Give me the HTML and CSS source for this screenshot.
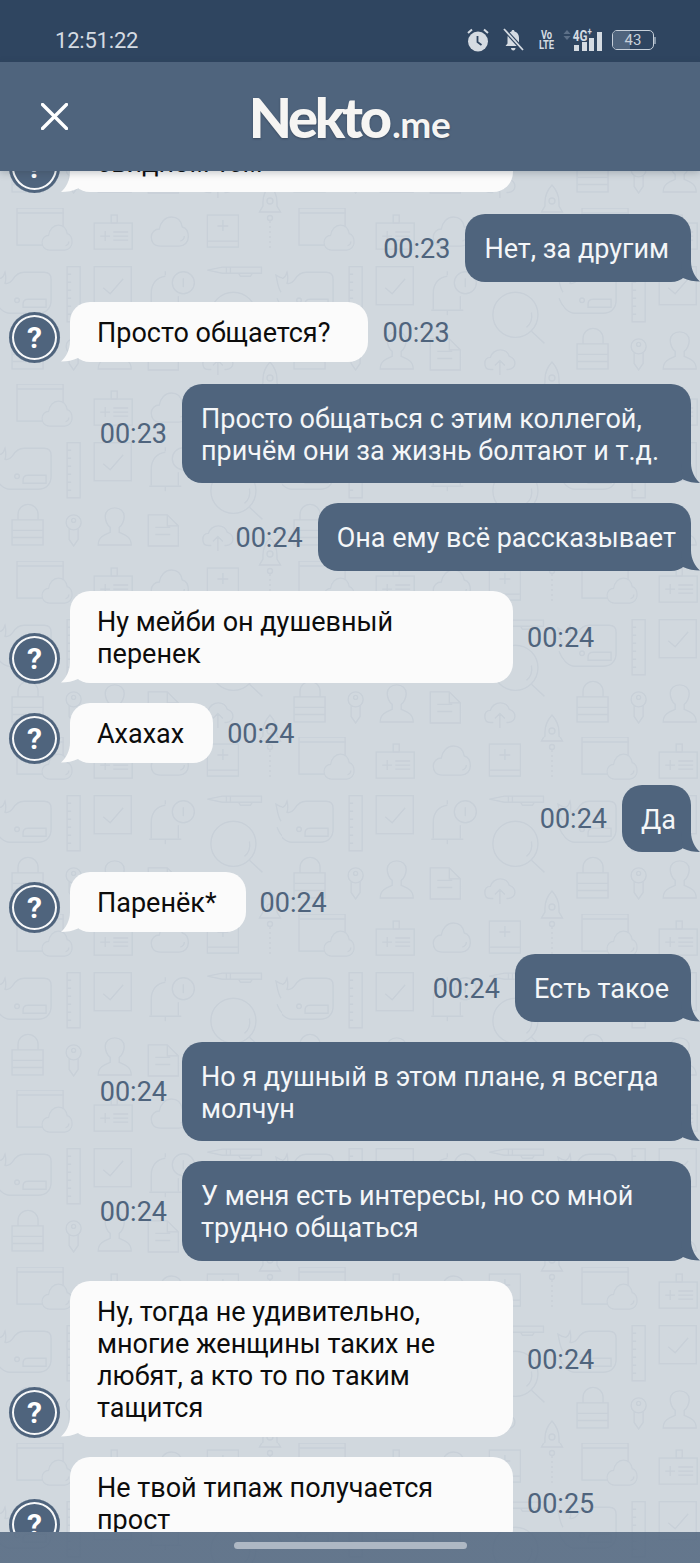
FILE: index.html
```html
<!DOCTYPE html>
<html lang="ru">
<head>
<meta charset="UTF-8">
<meta name="viewport" content="width=device-width, initial-scale=1.0">
<title>Nekto.me</title>
<link rel="stylesheet" href="styles.css">
</head>
<body>

<div class="phone">

  <div class="status">
    <span class="status__time">12:51:22</span>
    <div class="status__icons">
      <svg class="icon-alarm" width="22" height="24" viewBox="0 0 22 24">
        <circle cx="11" cy="13.5" r="10" fill="#d5dbe2"/>
        <path d="M10.5 8v6l4 3" fill="none" stroke="#2f4560" stroke-width="1.8"/>
        <path d="M1 5l4-3.5M21 5l-4-3.5" fill="none" stroke="#d5dbe2" stroke-width="2"/>
      </svg>
      <svg class="icon-bell" width="21" height="24" viewBox="0 0 21 24">
        <path d="M10 2c1 0 1.5.6 1.5 1.500C15 4.500 16 7.500 16 10v5l2 3H2.500l2-2.500V10c0-2.500 1-5.500 4-6.500C8.500 2.600 9 2 10 2z" fill="#d5dbe2"/>
        <path d="M8 20h4.500c0 1.500-1 2.500-2.200 2.500S8 21.500 8 20z" fill="#d5dbe2"/>
        <path d="M1 1l19 21" stroke="#2f4560" stroke-width="4"/>
        <path d="M1 1l19 21" stroke="#d5dbe2" stroke-width="1.8"/>
      </svg>
      <div class="volte"><span>Vo</span><span>LTE</span></div>
      <svg class="icon-arrows" width="8" height="10" viewBox="0 0 8 10">
        <path d="M4 0l3.5 4h-7zM4 10L.5 6h7z" fill="#5d7088"/>
      </svg>
      <div class="signal">
        <span class="signal__label">4G<sup>+</sup></span>
        <div class="signal__bars">
          <i class="bar bar--1"></i><i class="bar bar--2"></i><i class="bar bar--3"></i><i class="bar bar--4"></i>
        </div>
      </div>
      <div class="battery">
        <div class="battery__body">
          <div class="battery__level" style="width:43%"></div>
          <span class="battery__text">43</span>
        </div>
        <div class="battery__nub"></div>
      </div>
    </div>
  </div>

  <div class="topbar">
    <svg class="topbar__close" width="27" height="27" viewBox="0 0 27 27">
      <path d="M1.5 1.5l24 24M25.5 1.5l-24 24" stroke="#fff" stroke-width="3.4" stroke-linecap="round"/>
    </svg>
    <div class="logo">Nekto<span class="logo__me">.me</span></div>
  </div>

  <div class="chat">
    <div class="messages">

      <div class="msg msg--in">
        <div class="avatar">?</div>
        <div class="bubble bubble--in bubble--full">свидном тем</div>
      </div>

      <div class="msg msg--out">
        <span class="msg__time">00:23</span>
        <div class="bubble bubble--out bubble--roomy">Нет, за другим</div>
      </div>

      <div class="msg msg--in">
        <div class="avatar">?</div>
        <div class="bubble bubble--in bubble--roomy">Просто общается?</div>
        <span class="msg__time">00:23</span>
      </div>

      <div class="msg msg--out">
        <span class="msg__time">00:23</span>
        <div class="bubble bubble--out">Просто общаться с этим коллегой, причём они за жизнь болтают и т.д.</div>
      </div>

      <div class="msg msg--out">
        <span class="msg__time">00:24</span>
        <div class="bubble bubble--out">Она ему всё рассказывает</div>
      </div>

      <div class="msg msg--in">
        <div class="avatar">?</div>
        <div class="bubble bubble--in">Ну мейби он душевный перенек</div>
        <span class="msg__time">00:24</span>
      </div>

      <div class="msg msg--in">
        <div class="avatar">?</div>
        <div class="bubble bubble--in">Ахахах</div>
        <span class="msg__time">00:24</span>
      </div>

      <div class="msg msg--out">
        <span class="msg__time">00:24</span>
        <div class="bubble bubble--out">Да</div>
      </div>

      <div class="msg msg--in">
        <div class="avatar">?</div>
        <div class="bubble bubble--in">Паренёк*</div>
        <span class="msg__time">00:24</span>
      </div>

      <div class="msg msg--out">
        <span class="msg__time">00:24</span>
        <div class="bubble bubble--out bubble--roomy">Есть такое</div>
      </div>

      <div class="msg msg--out">
        <span class="msg__time">00:24</span>
        <div class="bubble bubble--out">Но я душный в этом плане, я всегда молчун</div>
      </div>

      <div class="msg msg--out">
        <span class="msg__time">00:24</span>
        <div class="bubble bubble--out">У меня есть интересы, но со мной трудно общаться</div>
      </div>

      <div class="msg msg--in">
        <div class="avatar">?</div>
        <div class="bubble bubble--in">Ну, тогда не удивительно, многие женщины таких не любят, а кто то по таким тащится</div>
        <span class="msg__time">00:24</span>
      </div>

      <div class="msg msg--in">
        <div class="avatar">?</div>
        <div class="bubble bubble--in">Не твой типаж получается прост</div>
        <span class="msg__time">00:25</span>
      </div>

    </div>
  </div>

  <div class="navbar">
    <div class="navbar__pill"></div>
  </div>

</div>

</body>
</html>
```

FILE: styles.css
```css
:root {
  --slate: #4f647d;
  --slate-dark: #2f4560;
  --paper: #d1d8de;
  /* the doodle wallpaper, one tile */
  --tile: url("data:image/svg+xml,%3Csvg xmlns='http://www.w3.org/2000/svg' width='282.5' height='176.5' viewBox='0 0 282.5 176.5'%3E%3Cdefs%3E%3Cg id='c'%3E%3Cpath d='M9 29C2 29 0 24 0 20C0 15 4 12 8 12C9 5 14 0 20 0C26 0 30 4 31 10C35 11 37 15 37 20C37 25 33 29 28 29Z'/%3E%3Cpath d='M29 24c3-1 4-3 4-5'/%3E%3C/g%3E%3Cg id='r'%3E%3Cpath d='M269.5-23C265-18 262.5-12 262.5-6V-2L259 4H280L276.5-2V-6C276.5-12 274-18 269.5-23Z'/%3E%3Ccircle cx='269.5' cy='-7' r='3'/%3E%3C/g%3E%3Cg id='w'%3E%3Cpath d='M-2 84C-5 80-6 72-7 67C-4 69-1 70 1 70C3 69 4 67 5 64C6 68 6 72 5 75C8 76 10 75 13 71C16 66 19 64 24 64H44Q51 64 51 71V92C51 100 46 105 38 105H10C3 105-3 98-6 90'/%3E%3Cpath d='M23 99V96C23 92 25 91 28 91H46V99Z'/%3E%3Ccircle cx='17' cy='92' r='2.3'/%3E%3C/g%3E%3C/defs%3E%3Cg fill='none' stroke='%23c8d0d8' stroke-width='1.4'%3E%3Crect x='17' y='0' width='46' height='37'/%3E%3Cpath d='M17 5H63'/%3E%3Cuse href='%23c' transform='translate(42 17) scale(.81 .86)' fill='%23d1d8de'/%3E%3Crect x='94' y='15' width='38' height='26'/%3E%3Crect x='111' y='7' width='6' height='8'/%3E%3Cpath d='M100 28h10M105 23v10M113 24h15M113 28h15M113 32h15'/%3E%3Cuse href='%23c' transform='translate(151 9)'/%3E%3Crect x='207' y='7' width='31' height='32'/%3E%3Cpath d='M207 33H238M217 18h11M222.5 12v11'/%3E%3Cuse href='%23r'/%3E%3Cuse href='%23r' y='176.5'/%3E%3Ccircle cx='269.5' cy='10' r='2.5'/%3E%3Cpath d='M269.5 13V41' stroke-dasharray='2 3'/%3E%3Cuse href='%23w'/%3E%3Cuse href='%23w' x='282.5'/%3E%3Crect x='67' y='58.5' width='13' height='55'/%3E%3Cpath d='M67 66h4M67 74h4M67 82h4M67 90h4M67 98h4M67 106h4'/%3E%3Crect x='94' y='58.5' width='37' height='38'/%3E%3Cpath d='M103 79.5L110 85.5L123 70.5'/%3E%3Cpath d='M151 101V85C151 75 157 69 165 68M178 88V101M149 102H181M165 102V107M165 63v4'/%3E%3Ccircle cx='183' cy='74.5' r='11'/%3E%3Cpath d='M183 70v9'/%3E%3Cpath d='M207 62L222 59H261V65H222ZM226 59v6M230 59v6M238 65L240 68H250L252 65'/%3E%3Ccircle cx='233' cy='106.5' r='22.5'/%3E%3Cpath d='M249 123L262 135M249 104C250 110 248 116 244 119'/%3E%3Crect x='12' y='135.5' width='31' height='25'/%3E%3Cpath d='M18 135.5V130A10 10 0 0 1 38 130V135.5M12 146H43M12 153H43'/%3E%3Ccircle cx='73.5' cy='138' r='7.5'/%3E%3Ccircle cx='73.5' cy='136' r='2'/%3E%3Cpath d='M69 144V155L73.5 161.5L78 155V144'/%3E%3Cpath d='M98 160.5C98 152 105 150 110 148V143C107 141 105 136 105 132C105 127 109 123.5 114.5 123.5C120 123.5 124 127 124 132C124 136 122 141 119 143V148C124 150 131 152 131 160.5Z'/%3E%3Cpath d='M148 130.5H167L178 141.5V161.5H148ZM167 130.5V141.5H178M155 143H170M155 150H170'/%3E%3Cpath d='M211 161H208C204 161 202.5 158 202.5 155C202.5 151 205 149 208 149C209 145 213 141.5 218 141.5C223 141.5 226 145 227 148C230 149 232.5 151 232.5 155C232.5 158 230 161 226 161H224M217.5 166.5V152M212.5 157L217.5 152L222.5 157'/%3E%3C/g%3E%3C/svg%3E");
}

* {
  box-sizing: border-box;
}

body {
  margin: 0;
  font-family: Roboto, "Noto Sans", sans-serif;
}

.phone {
  display: flex;
  flex-direction: column;
  width: 700px;
  height: 1563px;
  overflow: hidden;
}

/* status bar */
.status {
  display: flex;
  flex: none;
  align-items: center;
  justify-content: space-between;
  height: 62px;
  padding: 18px 44px 0 55px;
  background: var(--slate-dark);
  color: #d5dbe2;
}

.status__time {
  font-size: 22px;
  letter-spacing: -.2px;
}

.status__icons {
  display: flex;
  align-items: center;
}

.icon-alarm {
  margin-right: 14px;
}

.icon-bell {
  margin-right: 15px;
}

.volte {
  display: flex;
  flex-direction: column;
  align-items: center;
  width: 15px;
  margin-right: 9px;
  font-size: 13px;
  font-weight: 700;
  line-height: 10.5px;
  transform: scaleX(.72);
}

.icon-arrows {
  margin: -10px 1px 0 0;
}

.signal {
  display: flex;
  flex-direction: column;
  width: 31px;
  height: 21px;
  margin-right: 9px;
}

.signal__label {
  height: 12px;
  margin-left: -3px;
  font-size: 15px;
  font-weight: 700;
  line-height: 12px;
  transform: scaleX(.78);
}

.signal__label sup {
  font-size: 10px;
  line-height: 0;
}

.signal__bars {
  display: flex;
  align-items: flex-end;
  gap: 2.5px;
  height: 19px;
  margin-top: -10px;
  padding-left: 2px;
}

.bar {
  display: block;
  width: 5px;
  background: #d5dbe2;
}

.bar--1 { height: 6px; }
.bar--2 { height: 9px; }
.bar--3 { height: 13px; }
.bar--4 { height: 19px; }

.battery {
  display: flex;
  align-items: center;
}

.battery__body {
  position: relative;
  display: flex;
  align-items: center;
  justify-content: center;
  width: 42px;
  height: 20px;
  overflow: hidden;
  border: 1.5px solid #c7d0da;
  border-radius: 5px;
  font-size: 15px;
  color: #c7d0da;
}

.battery__level {
  position: absolute;
  top: 0;
  bottom: 0;
  left: 0;
  background: #4f647d;
}

.battery__text {
  position: relative;
}

.battery__nub {
  width: 2px;
  height: 7px;
  background: #8394a7;
}

/* header */
.topbar {
  position: relative;
  z-index: 1;
  display: flex;
  flex: none;
  align-items: center;
  justify-content: center;
  height: 109px;
  background: var(--slate);
  box-shadow: 0 2px 7px rgba(40, 50, 65, .25);
}

.topbar__close {
  position: absolute;
  top: 41px;
  left: 41px;
}

.logo {
  margin-left: -1px;
  padding-top: 1px;
  font-family: Lato, Roboto, sans-serif;
  font-size: 56px;
  font-weight: 900;
  line-height: 1;
  letter-spacing: -3.2px;
  color: #f6f5f3;
  text-shadow: 0 1px 2px rgba(30, 40, 55, .45);
}

.logo__me {
  margin-left: 3px;
  font-size: 37px;
  font-weight: 700;
  letter-spacing: -.4px;
}

/* messages */
.chat {
  flex: 1;
  overflow: hidden;
  background: var(--paper) var(--tile) 0 37px / 282.5px 176.5px;
}

.messages {
  display: flex;
  flex-direction: column;
  gap: 20px;
  margin-top: -39px;
}

.msg {
  display: flex;
  align-items: center;
  gap: 14px;
}

.msg--in + .msg--out {
  margin-top: 2px;
}

.msg--out {
  justify-content: flex-end;
  gap: 15px;
  padding-right: 9px;
}

.msg--in {
  padding-left: 9px;
}

.msg__time {
  flex: none;
  margin-top: 2px;
  font-size: 27px;
  line-height: 32px;
  color: var(--slate);
}

.bubble {
  position: relative;
  border-radius: 20px;
  font-size: 27px;
  line-height: 32px;
}

.bubble::after {
  content: "";
  position: absolute;
  bottom: 0;
  width: 20px;
  height: 20px;
  background: inherit;
}

.bubble--in {
  max-width: 443px;
  margin-left: -4px;
  padding: 15px 29px 13px 27px;
  background: #fbfbfb;
  color: #0c0c0c;
}

.bubble--in::after {
  left: -10px;
  clip-path: path("M10 0C10 8 6 16 1 20C7 20 13 19 18 16.5L20 0Z");
}

.bubble--out {
  max-width: 509px;
  padding: 19px 15px 16.5px 19px;
  background: var(--slate);
  color: #f4f6f8;
}

.bubble--out::after {
  right: -10px;
  clip-path: path("M10 0C10 8 14 16 19 20C13 20 7 19 2 16.5L0 0Z");
}

/* a few bubbles sit wider than their text */
.bubble--in.bubble--roomy {
  padding-right: 38px;
}

.bubble--out.bubble--roomy {
  padding-right: 22px;
}

.bubble--full {
  width: 443px;
}

.avatar {
  display: flex;
  flex: none;
  align-items: center;
  justify-content: center;
  align-self: flex-end;
  width: 51px;
  height: 51px;
  margin-bottom: -1px;
  border-radius: 50%;
  background: var(--slate);
  box-shadow: inset 0 0 0 3px var(--slate), inset 0 0 0 5px #f7f8f9;
  font-size: 30px;
  font-weight: 700;
  color: #fff;
}

/* android gesture bar */
.navbar {
  display: flex;
  flex: none;
  justify-content: center;
  height: 31px;
  padding-top: 10px;
  background:
    linear-gradient(rgba(79, 100, 125, .84), rgba(79, 100, 125, .84)),
    var(--paper) var(--tile) 0 88px / 282.5px 176.5px;
}

.navbar__pill {
  width: 233px;
  height: 7px;
  border-radius: 4px;
  background: #aeb8c4;
}
```
